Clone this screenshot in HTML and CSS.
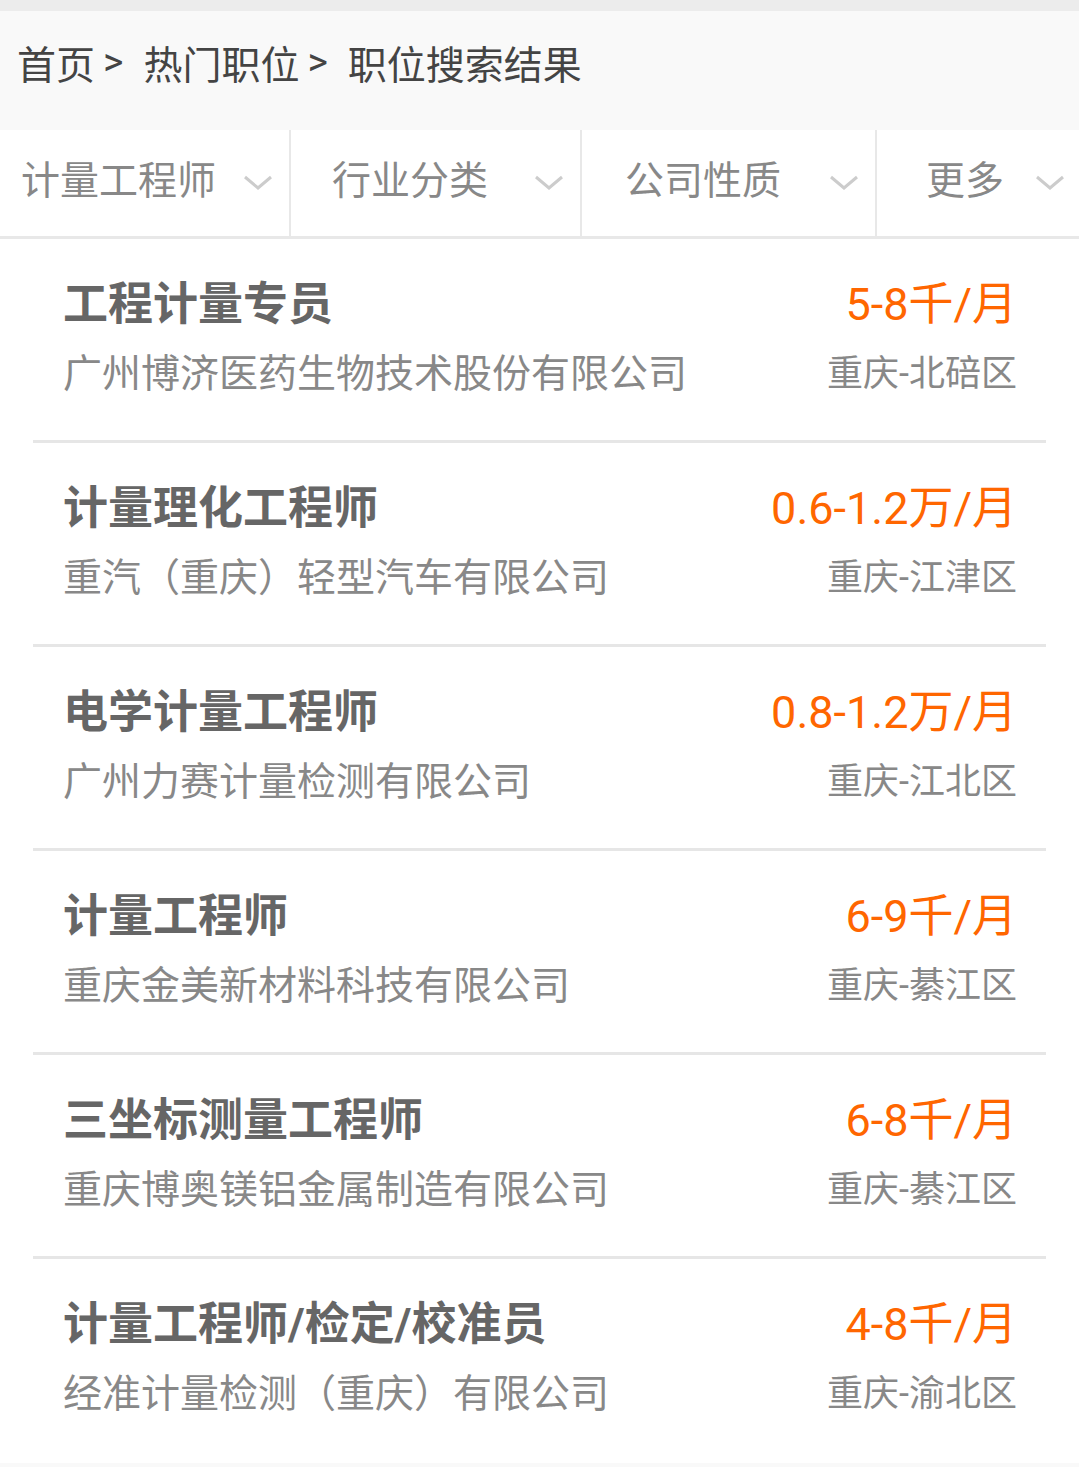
FILE: index.html
```html
<!DOCTYPE html>
<html lang="zh-CN">
<head>
<meta charset="utf-8">
<title>职位搜索结果</title>
<link rel="stylesheet" href="styles.css">
</head>
<body>
<div class="topstrip"></div>
<nav class="crumbs">
  <span>首页</span><span class="sep">&gt;</span><span>热门职位</span><span class="sep">&gt;</span><span>职位搜索结果</span>
</nav>
<div class="filters">
  <div class="tab tab1"><span>计量工程师</span><svg class="chev" viewBox="0 0 30 16"><polyline points="2,2 15,13 28,2"/></svg></div>
  <div class="tab tab2"><span>行业分类</span><svg class="chev" viewBox="0 0 30 16"><polyline points="2,2 15,13 28,2"/></svg></div>
  <div class="tab tab3"><span>公司性质</span><svg class="chev" viewBox="0 0 30 16"><polyline points="2,2 15,13 28,2"/></svg></div>
  <div class="tab tab4"><span>更多</span><svg class="chev" viewBox="0 0 30 16"><polyline points="2,2 15,13 28,2"/></svg></div>
</div>
<ul class="jobs">
  <li class="job">
    <div class="row"><span class="title">工程计量专员</span><span class="salary">5-8千/月</span></div>
    <div class="row"><span class="company">广州博济医药生物技术股份有限公司</span><span class="loc">重庆-北碚区</span></div>
  </li>
  <li class="job">
    <div class="row"><span class="title">计量理化工程师</span><span class="salary">0.6-1.2万/月</span></div>
    <div class="row"><span class="company">重汽（重庆）轻型汽车有限公司</span><span class="loc">重庆-江津区</span></div>
  </li>
  <li class="job">
    <div class="row"><span class="title">电学计量工程师</span><span class="salary">0.8-1.2万/月</span></div>
    <div class="row"><span class="company">广州力赛计量检测有限公司</span><span class="loc">重庆-江北区</span></div>
  </li>
  <li class="job">
    <div class="row"><span class="title">计量工程师</span><span class="salary">6-9千/月</span></div>
    <div class="row"><span class="company">重庆金美新材料科技有限公司</span><span class="loc">重庆-綦江区</span></div>
  </li>
  <li class="job">
    <div class="row"><span class="title">三坐标测量工程师</span><span class="salary">6-8千/月</span></div>
    <div class="row"><span class="company">重庆博奥镁铝金属制造有限公司</span><span class="loc">重庆-綦江区</span></div>
  </li>
  <li class="job last">
    <div class="row"><span class="title">计量工程师/检定/校准员</span><span class="salary">4-8千/月</span></div>
    <div class="row"><span class="company">经准计量检测（重庆）有限公司</span><span class="loc">重庆-渝北区</span></div>
  </li>
</ul>
<div class="bottomstrip"></div>
</body>
</html>
```
FILE: styles.css
```css
html, body {
  margin: 0;
  padding: 0;
  background: #ffffff;
  font-family: "Roboto", "Noto Sans CJK SC", sans-serif;
}
.topstrip {
  height: 11px;
  background: #ececec;
}
.crumbs {
  height: 119px;
  background: #f9f9f9;
  display: flex;
  align-items: center;
  padding-left: 17px;
  padding-bottom: 18px;
  box-sizing: border-box;
  font-size: 39px;
  color: #444444;
}
.crumbs .sep {
  margin: 0 20px 0 8px;
}
.filters {
  display: grid;
  grid-template-columns: 289px 291px 295px 1fr;
  height: 109px;
  border-bottom: 3px solid #e8e8e8;
  box-sizing: border-box;
  background: #fff;
}
.tab {
  display: flex;
  align-items: center;
  justify-content: space-between;
  padding-right: 16px;
  padding-bottom: 12px;
  font-size: 39px;
  color: #888888;
  border-left: 2px solid #e8e8e8;
}
.tab1 { padding-left: 21px; border-left: none; }
.tab2 { padding-left: 41px; }
.tab3 { padding-left: 43px; }
.tab4 { padding-left: 49px; padding-right: 14px; }
.chev {
  width: 30px;
  height: 16px;
  margin-top: 12px;
}
.chev polyline {
  fill: none;
  stroke: #cccccc;
  stroke-width: 3;
}
.jobs {
  list-style: none;
  margin: 0;
  padding: 0;
}
.job {
  margin: 0 33px;
  padding: 36px 29px 0 30px;
  height: 204px;
  box-sizing: border-box;
  border-bottom: 3px solid #e6e6e6;
}
.job.last {
  border-bottom: none;
}
.row {
  display: flex;
  justify-content: space-between;
  align-items: center;
}
.row + .row {
  margin-top: 14px;
}
.title {
  font-size: 45px;
  font-weight: bold;
  color: #666666;
  line-height: 60px;
}
.salary {
  font-size: 45px;
  color: #ff6600;
  line-height: 60px;
}
.company, .loc {
  font-size: 39px;
  color: #888888;
  line-height: 50px;
}
.loc {
  font-size: 36px;
}
.bottomstrip {
  height: 20px;
  background: #f9f9f9;
}
```
